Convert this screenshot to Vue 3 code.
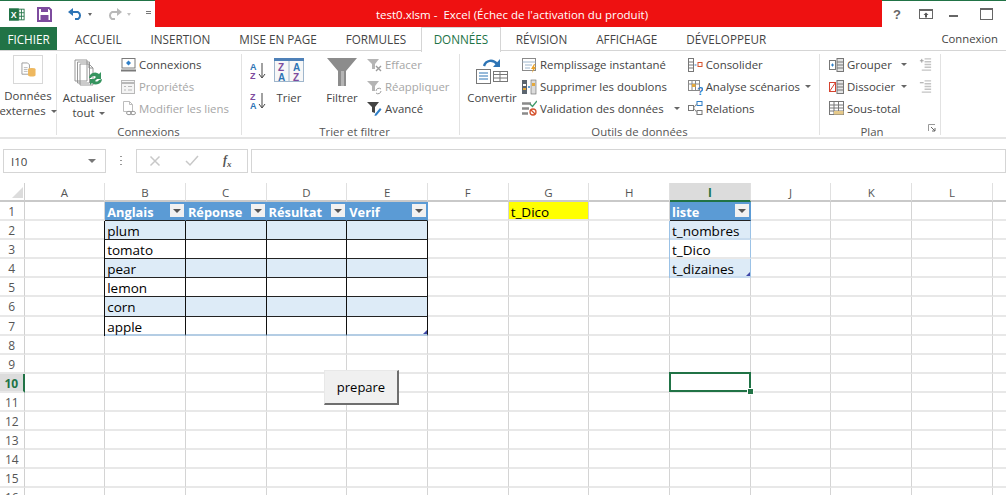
<script setup>
import { computed } from 'vue';

// small icon bodies, drawn on a 16x16 box unless the svg says otherwise
const icons = {
  conn: '<rect x="2" y="1.5" width="13" height="9.5" fill="#fff" stroke="#7a7a7a"/><path d="M8.5 3.5l2.5 2.5-2.5 2.5-2.5-2.5z" fill="#2f7fc8"/><path d="M1 13.5h15" stroke="#7a7a7a" stroke-width="2"/>',
  prop: '<rect x="1.5" y="1.5" width="13" height="13" fill="#f4f4f4" stroke="#b8b8b8"/><path d="M1.5 4h13" stroke="#b8b8b8" stroke-width="2"/><path d="M4 7.5h2M4 11h2M8 7.5h4M8 11h4" stroke="#b8b8b8"/>',
  links: '<path d="M3.5 1.5h6l3 3v7h-9z" fill="#fff" stroke="#bdbdbd"/><path d="M9.5 1.5v3h3" fill="none" stroke="#bdbdbd"/><ellipse cx="9" cy="13" rx="2.5" ry="1.7" fill="none" stroke="#9a9a9a"/><ellipse cx="13" cy="13" rx="2.5" ry="1.7" fill="none" stroke="#9a9a9a"/>',
  clear: '<path d="M1 2h12L9 7v5H6V7z" fill="#b5b5b5"/><path d="M10 9l5 5m0-5l-5 5" stroke="#9c9c9c" stroke-width="1.4"/>',
  reapply: '<path d="M1 2h12L9 7v5H6V7z" fill="#b5b5b5"/><path d="M10 12a3 3 0 0 1 5-2m0 2a3 3 0 0 1-5 2" fill="none" stroke="#9c9c9c"/>',
  adv: '<path d="M1 2h12L9 7v6l-3-1V7z" fill="#444"/><path d="M9 14l5-6 1.5 1.500-5 6-2 .5z" fill="#2f7fc8"/>',
  flash: '<rect x="1.500" y="1.500" width="13" height="12" fill="#fff" stroke="#8a8a8a"/><path d="M1.500 5h13M4 8h7M4 11h5" stroke="#9eb6cc"/><path d="M13 7l-3 5h2l-1 4 4-6h-2l1-3z" fill="#eaa32a"/>',
  dupes: '<rect x="1" y="1" width="5" height="14" fill="#5c6670"/><rect x="2" y="5" width="3" height="2" fill="#fff"/><rect x="2" y="9" width="3" height="2" fill="#e5a93c"/><rect x="10" y="1" width="5" height="14" fill="#dcdcdc" stroke="#666" stroke-width=".6"/><rect x="11" y="4" width="3" height="3" fill="#e5a93c"/><path d="M7 8h2" stroke="#2f7fc8" stroke-width="1.500"/>',
  valid: '<path d="M1 3.500h9M1 8.500h7M1 13.500h6" stroke="#8a8a8a" stroke-width="2.500"/><path d="M9 4l2.500 2.500L16 1" fill="none" stroke="#3f9a6a" stroke-width="1.400"/><circle cx="12" cy="12" r="3" fill="#fff" stroke="#d5532f" stroke-width="1.300"/><path d="M10 10l4 4" stroke="#d5532f" stroke-width="1.200"/>',
  consol: '<rect x="1.500" y="1.500" width="5" height="13" fill="#fff" stroke="#777"/><path d="M1.500 5h5M1.500 8h5M1.500 11h5" stroke="#777"/><path d="M7.500 8h2" stroke="#2f7fc8"/><rect x="11" y="5.500" width="4" height="4" fill="#fff" stroke="#d5532f"/>',
  scen: '<rect x="1.500" y="1.500" width="11" height="10" fill="#fff" stroke="#888"/><path d="M1.500 5h11M5 1.500v10M8.500 1.500v10" stroke="#888"/><rect x="5" y="5" width="3.500" height="3" fill="#e5a93c"/><text x="10" y="15.500" font-size="11" font-weight="700" fill="#2f7fc8" font-family="Liberation Sans">?</text>',
  rel: '<rect x="1.500" y="5.500" width="5" height="5" fill="#fff" stroke="#777"/><rect x="10" y="1.500" width="5" height="4" fill="#fff" stroke="#2f7fc8"/><rect x="10" y="10.500" width="5" height="4" fill="#fff" stroke="#777"/><path d="M6.500 8L10 3.500M6.500 8L10 12.500" stroke="#8a8a8a"/>',
  group: '<rect x="1.500" y="3.500" width="6" height="9" fill="#fff" stroke="#777"/><path d="M3 8h3M4.500 6.500v3" stroke="#2f7fc8"/><rect x="9" y="1.500" width="6.500" height="13" fill="#e4e4e4" stroke="#777"/><path d="M9 5h6.500M9 8h6.500M9 11h6.500" stroke="#777"/>',
  ungroup: '<rect x="1.500" y="3.500" width="6" height="9" fill="#fff" stroke="#d5432f"/><path d="M1.500 12.500l6-9" stroke="#d5432f"/><rect x="9" y="1.500" width="6.500" height="13" fill="#e4e4e4" stroke="#777"/><path d="M9 5h6.500M9 8h6.500M9 11h6.500" stroke="#777"/>',
  subtotal: '<rect x="1.500" y="1.500" width="14" height="13" fill="#fff" stroke="#777"/><path d="M1.500 5h14M1.500 8h14M1.500 11h14M6 1.500v13M10.500 1.500v13" stroke="#777"/><rect x="6" y="11" width="9.500" height="3.500" fill="#e5c98a"/>',
  more: '<path d="M2 4h4M4 2v4" stroke="#9a9a9a"/><path d="M7 2h7M7 5h7M7 8h7M7 11h7M4 14h10" stroke="#c4c4c4" stroke-width="1.500"/>',
  less: '<path d="M2 4h4" stroke="#9a9a9a"/><path d="M7 2h7M7 5h7M7 8h7M7 11h7M4 14h10" stroke="#c4c4c4" stroke-width="1.500"/>',
};

const connexions = [
  { icon: 'conn', label: 'Connexions' },
  { icon: 'prop', label: 'Propriétés', off: true },
  { icon: 'links', label: 'Modifier les liens', off: true },
];
const filterItems = [
  { icon: 'clear', label: 'Effacer', off: true },
  { icon: 'reapply', label: 'Réappliquer', off: true },
  { icon: 'adv', label: 'Avancé' },
];
const dataTools = [
  { icon: 'flash', label: 'Remplissage instantané' },
  { icon: 'dupes', label: 'Supprimer les doublons' },
  { icon: 'valid', label: 'Validation des données', caret: true },
];
const dataTools2 = [
  { icon: 'consol', label: 'Consolider' },
  { icon: 'scen', label: 'Analyse scénarios', caret: true },
  { icon: 'rel', label: 'Relations' },
];
const planItems = [
  { icon: 'group', label: 'Grouper', caret: true, side: 'more' },
  { icon: 'ungroup', label: 'Dissocier', caret: true, side: 'less' },
  { icon: 'subtotal', label: 'Sous-total' },
];

const tabs = ['ACCUEIL', 'INSERTION', 'MISE EN PAGE', 'FORMULES', 'DONNÉES', 'RÉVISION', 'AFFICHAGE', 'DÉVELOPPEUR'];
// last column is only the sliver at the window edge, its letter is off screen
const columns = [...'ABCDEFGHIJKL'.split(''), ''];
const rows = Array.from({ length: 16 }, (_, i) => i + 1);

const fruits = ['plum', 'tomato', 'pear', 'lemon', 'corn', 'apple'];
const tableHead = { B: 'Anglais', C: 'Réponse', D: 'Résultat', E: 'Verif' };
const listItems = ['t_nombres', 't_Dico', 't_dizaines'];

// Builds what each cell shows, keyed like "B2"
const cells = computed(() => {
  const map = {};
  Object.entries(tableHead).forEach(([col, text]) => {
    map[col + 1] = { text, cls: 'th', filter: true };
  });
  fruits.forEach((fruit, i) => {
    const row = i + 2;
    'BCDE'.split('').forEach((col) => {
      map[col + row] = {
        text: col === 'B' ? fruit : '',
        cls: ['td', row % 2 === 0 ? 'band' : '', col === 'B' ? 'td-first' : '', row === 7 ? 'td-last' : ''].join(' '),
        corner: col === 'E' && row === 7,
      };
    });
  });
  map.G1 = { text: 't_Dico', cls: 'yellow' };
  map.I1 = { text: 'liste', cls: 'th', filter: true };
  listItems.forEach((text, i) => {
    map['I' + (i + 2)] = { text, cls: 'list-cell ' + (i % 2 === 0 ? 'band' : ''), corner: i === 2 };
  });
  map.I10 = { text: '', cls: 'selected' };
  return map;
});
</script>

<template>
  <div class="app">
    <header class="titlebar">
      <div class="qat">
        <svg class="xl" viewBox="0 0 18 16"><rect x="0" y="0" width="18" height="16" fill="#fff"/><rect x="11" y="2" width="6" height="12" fill="#fff" stroke="#217346"/><path d="M11 6h6M11 10h6M14 2v12" stroke="#217346"/><rect x="0" y="1" width="11" height="14" fill="#217346"/><text x="2" y="12" font-size="10" font-weight="700" fill="#fff" font-family="Liberation Sans">X</text></svg>
        <svg class="save" viewBox="0 0 15 15"><path d="M1 1h11l2 2v11H1z" fill="none" stroke="#7d4b9e" stroke-width="2"/><rect x="4" y="1" width="7" height="4" fill="#7d4b9e"/><rect x="3.500" y="8" width="8" height="5" fill="#7d4b9e"/></svg>
        <svg class="undo" viewBox="0 0 17 12"><path d="M4 4h7a4 4 0 0 1 0 7H8" fill="none" stroke="#2d74b5" stroke-width="2"/><path d="M6 0L1 4l5 4z" fill="#2d74b5"/></svg>
        <span class="mini-caret"></span>
        <svg class="redo" viewBox="0 0 17 12"><path d="M13 4H6a4 4 0 0 0 0 7h3" fill="none" stroke="#b9b9b9" stroke-width="2"/><path d="M11 0l5 4-5 4z" fill="#b9b9b9"/></svg>
        <span class="mini-caret pale"></span>
        <span class="qat-more"></span>
      </div>
      <div class="title-red">test0.xlsm -&nbsp; Excel (Échec de l'activation du produit)</div>
      <div class="winctl">
        <span class="help">?</span>
        <svg class="wi" viewBox="0 0 14 10"><rect x=".5" y=".5" width="13" height="9" fill="none" stroke="#666"/><path d="M.5 1.500h13" stroke="#666"/><path d="M7 3.500l-2.500 2.500h1.500v2.500h2V6h1.500z" fill="#555"/></svg>
        <span class="minimize"></span>
        <span class="maximize"></span>
      </div>
    </header>

    <nav class="tabs">
      <div class="tab file">FICHIER</div>
      <div class="tab-list">
        <div v-for="tab in tabs" :key="tab" class="tab" :class="{ active: tab === 'DONNÉES' }">{{ tab }}</div>
      </div>
      <div class="login">Connexion</div>
    </nav>

    <section class="ribbon">
      <div class="group g-ext">
        <div class="group-body">
          <div class="big">
            <div class="ext-box">
              <svg viewBox="0 0 16 16" width="15" height="15"><path d="M1 1h6l2 2v10H1z" fill="#fff" stroke="#9a9a9a"/><path d="M3 6h4M3 8h4M3 10h4" stroke="#b9b9b9"/><ellipse cx="11.500" cy="8" rx="4" ry="1.500" fill="#eeb85f"/><path d="M7.500 8v6c0 2 8 2 8 0V8z" fill="#eeb85f"/></svg>
            </div>
            <span class="big-label">Données<br>externes <i class="caret"></i></span>
          </div>
        </div>
      </div>

      <div class="group g-conn">
        <div class="group-body">
          <div class="big refresh">
            <svg viewBox="0 0 30 28" width="30" height="28"><path d="M1 1h12v21H1zM3.500 3h12v21h-12zM6 5h9l4 4v17H6z" fill="#fff" stroke="#8d8d8d" stroke-width=".9"/><path d="M15 5v4h4" fill="none" stroke="#8d8d8d"/><path d="M15 19a6 6 0 0 1 10-4l2-2v7h-7l2-2a3 3 0 0 0-5 1z" fill="#36945f"/><path d="M28 20a6 6 0 0 1-10 4l-2 2v-6h7l-2 2a3 3 0 0 0 4-1z" fill="#36945f"/></svg>
            <span class="big-label">Actualiser<br>tout <i class="caret"></i></span>
          </div>
          <ul class="list">
            <li v-for="item in connexions" :key="item.label" :class="{ off: item.off }">
              <svg viewBox="0 0 16 16" width="16" height="16" v-html="icons[item.icon]"></svg>
              <span>{{ item.label }}</span>
            </li>
          </ul>
        </div>
        <div class="group-label">Connexions</div>
      </div>

      <div class="group g-filter">
        <div class="group-body">
          <div class="sort-arrows">
            <svg viewBox="0 0 16 18" width="16" height="18"><text x="0" y="8" class="az blue">A</text><text x="0" y="17" class="az purple">Z</text><path d="M12 1v14M9 12l3 4 3-4" fill="none" stroke="#444"/></svg>
            <svg viewBox="0 0 16 18" width="16" height="18"><text x="0" y="8" class="az purple">Z</text><text x="0" y="17" class="az blue">A</text><path d="M12 1v14M9 12l3 4 3-4" fill="none" stroke="#444"/></svg>
          </div>
          <div class="big sort">
            <svg viewBox="0 0 30 24" width="30" height="24"><rect x=".5" y=".5" width="29" height="23" fill="#f7f7f7" stroke="#9fb6cc"/><rect x="0" y="0" width="30" height="3" fill="#4f81b8"/><path d="M15 3v21" stroke="#9fb6cc"/><text x="4" y="13" class="az-big purple">Z</text><text x="4" y="23" class="az-big blue">A</text><text x="19" y="13" class="az-big blue">A</text><text x="19" y="23" class="az-big purple">Z</text></svg>
            <span class="big-label">Trier</span>
          </div>
          <div class="big filter">
            <svg viewBox="0 0 30 28" width="30" height="28"><path d="M0 0h30L19 13v15h-8V13z" fill="#8c8c8c"/><path d="M14 13h3v15h-3z" fill="#b5b5b5"/></svg>
            <span class="big-label">Filtrer</span>
          </div>
          <ul class="list">
            <li v-for="item in filterItems" :key="item.label" :class="{ off: item.off }">
              <svg viewBox="0 0 16 16" width="16" height="16" v-html="icons[item.icon]"></svg>
              <span>{{ item.label }}</span>
            </li>
          </ul>
        </div>
        <div class="group-label">Trier et filtrer</div>
      </div>

      <div class="group g-tools">
        <div class="group-body">
          <div class="big convert">
            <svg viewBox="0 0 32 26" width="32" height="26"><path d="M8 8c2-6 9-7 13-2" fill="none" stroke="#2d74b5" stroke-width="2.400"/><path d="M24 1v8h-7z" fill="#2d74b5"/><rect x=".5" y="11.500" width="14" height="14" fill="#fff" stroke="#777"/><path d="M3 15h9M3 18h9M3 21h9" stroke="#2d74b5"/><rect x="17.500" y="13.500" width="14" height="10" fill="#fff" stroke="#777"/><path d="M17.500 16.500h14M17.500 20h14M24 13.500v10" stroke="#777"/></svg>
            <span class="big-label">Convertir</span>
          </div>
          <ul class="list">
            <li v-for="item in dataTools" :key="item.label">
              <svg viewBox="0 0 16 16" width="16" height="16" v-html="icons[item.icon]"></svg>
              <span>{{ item.label }}</span>
              <i v-if="item.caret" class="caret after"></i>
            </li>
          </ul>
          <ul class="list list-2">
            <li v-for="item in dataTools2" :key="item.label">
              <svg viewBox="0 0 16 16" width="16" height="16" v-html="icons[item.icon]"></svg>
              <span>{{ item.label }}</span>
              <i v-if="item.caret" class="caret"></i>
            </li>
          </ul>
        </div>
        <div class="group-label">Outils de données</div>
      </div>

      <div class="group g-plan">
        <div class="group-body">
          <ul class="list">
            <li v-for="item in planItems" :key="item.label">
              <svg viewBox="0 0 16 16" width="16" height="16" v-html="icons[item.icon]"></svg>
              <span class="plan-text">{{ item.label }}</span>
              <i v-if="item.caret" class="caret"></i>
              <svg v-if="item.side" class="plan-side" viewBox="0 0 16 16" width="15" height="15" v-html="icons[item.side]"></svg>
            </li>
          </ul>
        </div>
        <div class="group-label">Plan</div>
        <svg class="launcher" viewBox="0 0 8 8" width="8" height="8"><path d="M.5 7V.5H7" fill="none" stroke="#999"/><path d="M3 3l4 4M7 4v3H4" fill="none" stroke="#666"/></svg>
      </div>
    </section>

    <section class="formula">
      <div class="namebox">
        <span>I10</span>
        <i class="name-caret"></i>
      </div>
      <span class="grip"></span>
      <div class="fx-buttons">
        <svg viewBox="0 0 12 12" width="12" height="12"><path d="M1.500 1.500l9 9m0-9l-9 9" stroke="#c8c8c8" stroke-width="1.500"/></svg>
        <svg viewBox="0 0 14 12" width="14" height="12"><path d="M1 6l4 4 8-9" fill="none" stroke="#c8c8c8" stroke-width="1.500"/></svg>
        <span class="fx">f<sub>x</sub></span>
      </div>
      <div class="formula-input"></div>
    </section>

    <section class="sheet">
      <div class="corner"><span class="corner-tri"></span></div>
      <div v-for="col in columns" :key="col" class="col-head" :class="{ current: col === 'I' }">{{ col }}</div>
      <template v-for="row in rows" :key="row">
        <div class="row-head" :class="{ current: row === 10 }">{{ row }}</div>
        <div v-for="col in columns" :key="col + row" class="cell" :class="cells[col + row]?.cls">
          <span v-if="cells[col + row]?.text" class="cell-text">{{ cells[col + row].text }}</span>
          <i v-if="cells[col + row]?.filter" class="filter-btn"></i>
          <i v-if="cells[col + row]?.corner" class="resize"></i>
        </div>
      </template>
      <button class="prepare">prepare</button>
    </section>
  </div>
</template>

<style scoped>
.app {
  width: 1006px;
  height: 495px;
  overflow: hidden;
  background: #fff;
  font-family: "Open Sans", "Noto Sans", sans-serif;
  color: #444;
  display: flex;
  flex-direction: column;
}

/* title bar */
.titlebar {
  height: 27px;
  display: flex;
  flex: none;
  border-top: 1px solid #217346;
  box-sizing: border-box;
}
.qat {
  width: 155px;
  display: flex;
  align-items: center;
  flex: none;
  padding-left: 9px;
  box-sizing: border-box;
}
.xl { width: 16px; height: 15px; }
.save { width: 15px; height: 15px; margin-left: 12px; }
.undo { width: 17px; height: 12px; margin-left: 15px; }
.redo { width: 17px; height: 12px; margin-left: 14px; }
.mini-caret {
  margin-left: 4px;
  border-left: 2.5px solid transparent;
  border-right: 2.5px solid transparent;
  border-top: 3px solid #666;
}
.mini-caret.pale { border-top-color: #c2c2c2; }
.qat-more {
  margin-left: 15px;
  width: 5px;
  height: 6px;
  border-top: 1px solid #777;
  background: linear-gradient(#0000 1px, #777 1px, #777 2px, #0000 2px);
}
.title-red {
  margin-top: -1px;
  width: 727px;
  flex: none;
  background: #ee1111;
  color: #fff;
  font-size: 11.5px;
  line-height: 30px;
  text-align: center;
  padding-right: 13px;
  box-sizing: border-box;
  white-space: nowrap;
}
.winctl {
  flex: 1;
  display: flex;
  align-items: center;
  padding-left: 11px;
}
.help { font: 700 13px "Liberation Sans", sans-serif; color: #666; }
.wi { width: 14px; height: 10px; margin-left: 18px; }
.minimize { width: 9px; height: 2px; background: #666; margin: 4px 0 0 16px; }
.maximize { width: 11px; height: 9px; border: 1px solid #666; border-top-width: 2px; margin-left: 22px; }

/* tabs */
.tabs {
  height: 24px;
  flex: none;
  display: flex;
  align-items: stretch;
  border-bottom: 1px solid #d5d5d5;
  box-sizing: border-box;
  position: relative;
  font-size: 11.7px;
}
.tab-list { display: flex; padding-left: 3.5px; }
.tab {
  padding: 0 14.5px;
  line-height: 24px;
  white-space: nowrap;
  color: #444;
}
.tab.file {
  width: 57px;
  padding: 0;
  text-align: center;
  background: #217346;
  color: #fff;
  box-sizing: border-box;
}
.tab.active {
  color: #217346;
  background: #fff;
  border: 1px solid #d5d5d5;
  border-bottom: 0;
  height: 24px;
  line-height: 23px;
  padding: 0 12px;
  margin: 0;
}
.login { margin-left: auto; padding-right: 8px; line-height: 24px; font-size: 11.3px; color: #444; }

/* ribbon */
.ribbon {
  height: 88px;
  flex: none;
  display: flex;
  border-bottom: 2px solid #e4e4e4;
  box-sizing: border-box;
  font-size: 11.4px;
  padding-top: 3px;
}
.group {
  position: relative;
  box-sizing: border-box;
  flex: none;
  display: flex;
  flex-direction: column;
  height: 81px;
  border-right: 1px solid #e2e2e2;
}
.group-body {
  display: flex;
  height: 70px;
  flex: none;
}
.group-label {
  height: 16px;
  line-height: 16px;
  text-align: center;
  font-size: 11.4px;
  color: #555;
}
.g-ext { width: 57px; }
.g-conn { width: 185px; padding-left: 3px; }
.g-conn .group-label { padding-right: 4px; }
.g-filter { width: 218px; padding-left: 8px; }
.g-tools { width: 360px; padding-left: 6px; }
.g-tools .group-label { padding-right: 6px; }
.g-plan { width: 121px; padding-left: 8px; }
.g-plan .group-label { padding-right: 24px; }

.big {
  display: flex;
  flex-direction: column;
  align-items: center;
  flex: none;
}
.big-label {
  text-align: center;
  line-height: 15px;
  color: #444;
  white-space: nowrap;
}
.ext-box {
  width: 30px;
  height: 29px;
  margin: 1px 0 4px;
  border: 1px solid #d8d8d8;
  box-sizing: border-box;
  display: flex;
  align-items: center;
  justify-content: center;
}
.g-ext .big { width: 56px; }
.refresh { width: 58px; padding-top: 5px; gap: 3px; }
.sort { width: 32px; margin-left: 5px; padding-top: 4px; gap: 8px; }
.filter { width: 44px; margin-left: 15px; padding-top: 4px; gap: 4px; }
.convert { width: 52px; padding-top: 4px; gap: 6px; }
.sort-arrows {
  display: flex;
  flex-direction: column;
  gap: 12px;
  padding-top: 8px;
  width: 18px;
  flex: none;
}
.az { font: 700 9px "Liberation Sans", sans-serif; }
.az-big { font: 700 10px "Liberation Sans", sans-serif; }
.blue { fill: #2d74b5; }
.purple { fill: #7d4b9e; }

.list {
  list-style: none;
  margin: 0;
  padding: 0;
  display: flex;
  flex-direction: column;
}
.list li {
  height: 21.7px;
  flex: none;
  display: flex;
  align-items: center;
  gap: 3px;
  white-space: nowrap;
  color: #444;
}
.list li.off { color: #a6a6a6; }
.g-conn .list { margin-left: 2px; }
.g-filter .list { margin-left: 2px; }
.g-tools .list { margin-left: 3px; }
.g-tools .list-2 { margin-left: 7px; }
.g-plan .list { width: 100%; }
.plan-text { min-width: 49px; }
.plan-side { margin-left: auto; margin-right: 7px; }
.caret {
  display: inline-block;
  vertical-align: middle;
  border-left: 3px solid transparent;
  border-right: 3px solid transparent;
  border-top: 3px solid #666;
  margin-left: 2px;
}
.caret.after { margin-left: 7px; }
.launcher { position: absolute; right: 4px; bottom: 3px; }

/* formula bar */
.formula {
  height: 44px;
  flex: none;
  box-sizing: border-box;
  padding: 10px 0 10px 3px;
  display: flex;
  align-items: stretch;
}
.namebox {
  width: 103px;
  border: 1px solid #d5d5d5;
  box-sizing: border-box;
  display: flex;
  align-items: center;
  justify-content: space-between;
  padding: 0 9px 0 7px;
  font-size: 11.5px;
  color: #444;
}
.name-caret {
  border-left: 4px solid transparent;
  border-right: 4px solid transparent;
  border-top: 4px solid #777;
}
.grip {
  width: 2px;
  height: 10px;
  margin: 7px 14px 0 14px;
  background: repeating-linear-gradient(#999 0 1px, #0000 1px 4px);
}
.fx-buttons {
  width: 112px;
  border: 1px solid #d5d5d5;
  box-sizing: border-box;
  display: flex;
  align-items: center;
  gap: 24px;
  padding-left: 12px;
}
.fx { font: italic 700 12px "Liberation Serif", serif; color: #555; }
.fx sub { font-size: 9px; }
.formula-input {
  flex: 1;
  margin-left: 3px;
  border: 1px solid #d5d5d5;
}

/* sheet */
.sheet {
  position: relative;
  flex: 1;
  display: grid;
  grid-template-columns: 24.5px repeat(13, 80.7px);
  grid-template-rows: 19px repeat(16, 19.1px);
  font-size: 13.5px;
  color: #000;
}
.corner, .col-head, .row-head {
  box-sizing: border-box;
  background: #fff;
  color: #555;
  text-align: center;
}
.corner {
  border-bottom: 2px solid #c9c9c9;
  border-right: 1px solid #d0d0d0;
  position: relative;
}
.corner-tri {
  position: absolute;
  right: 1px;
  bottom: 2px;
  border-left: 11px solid transparent;
  border-bottom: 11px solid #dcdcdc;
}
.col-head {
  border-bottom: 2px solid #c9c9c9;
  border-right: 1px solid #e0e0e0;
  font-size: 11.5px;
  line-height: 19px;
}
.col-head.current {
  background: #dcdcdc;
  color: #217346;
  border-bottom-color: #217346;
  font-weight: 700;
}
.row-head {
  border-bottom: 2px solid #e8e8e8;
  border-right: 1px solid #d0d0d0;
  font-size: 12px;
  line-height: 20px;
}
.row-head.current {
  background: #dcdcdc;
  color: #217346;
  border-right: 2px solid #217346;
  font-weight: 700;
}
.cell {
  box-sizing: border-box;
  border-right: 1px solid #d4d4d4;
  border-bottom: 2px solid #e8e8e8;
  position: relative;
  overflow: visible;
  min-width: 0;
}
.cell-text {
  padding-left: 2px;
  line-height: 20px;
  white-space: nowrap;
  display: block;
}
.th {
  background: #5b9bd5;
  color: #fff;
  font-weight: 700;
  font-size: 12.8px;
  border-right-color: #5b9bd5;
  border-bottom: 1px solid #222;
}
.th .cell-text { color: #fff; }
.filter-btn {
  position: absolute;
  right: 1px;
  top: 2px;
  width: 14px;
  height: 13px;
  background: #f1f1f1;
}
.filter-btn::after {
  content: "";
  position: absolute;
  left: 3px;
  top: 5px;
  border-left: 4px solid transparent;
  border-right: 4px solid transparent;
  border-top: 4px solid #555;
}
.td {
  border-right: 1px solid #111;
  border-bottom: 1px solid #222;
}
.td-first { box-shadow: -1px 0 0 #111; }
.td-last { border-bottom: 2px solid #b4cde4; }
.band { background: #ddebf7; }
.yellow { background: #ffff00; }
.list-cell {
  border-right: 1px solid #9bc2e6;
  box-shadow: -1px 0 0 #9bc2e6;
  border-bottom: 2px solid #e8e8e8;
}
.list-cell.band { border-bottom-color: #c9dcee; }
.resize {
  position: absolute;
  right: 0;
  bottom: 0;
  border-left: 4px solid transparent;
  border-bottom: 4px solid #3f48a8;
}
.selected { z-index: 1; }
.selected::before {
  content: "";
  position: absolute;
  left: -1px;
  right: -1px;
  top: -2px;
  bottom: -1px;
  border: 2px solid #217346;
}
.selected::after {
  content: "";
  position: absolute;
  right: -4px;
  bottom: -4px;
  width: 5px;
  height: 5px;
  background: #217346;
  border: 1px solid #fff;
}
.prepare {
  position: absolute;
  left: 324px;
  top: 187px;
  width: 75px;
  height: 35px;
  padding: 0;
  background: #f0f0f0;
  border: 0;
  border-top: 1px solid #e8e8e8;
  border-left: 1px solid #e8e8e8;
  border-right: 2px solid #6e6e6e;
  border-bottom: 2px solid #6e6e6e;
  font: 13px "Open Sans", sans-serif;
  color: #000;
}
</style>
